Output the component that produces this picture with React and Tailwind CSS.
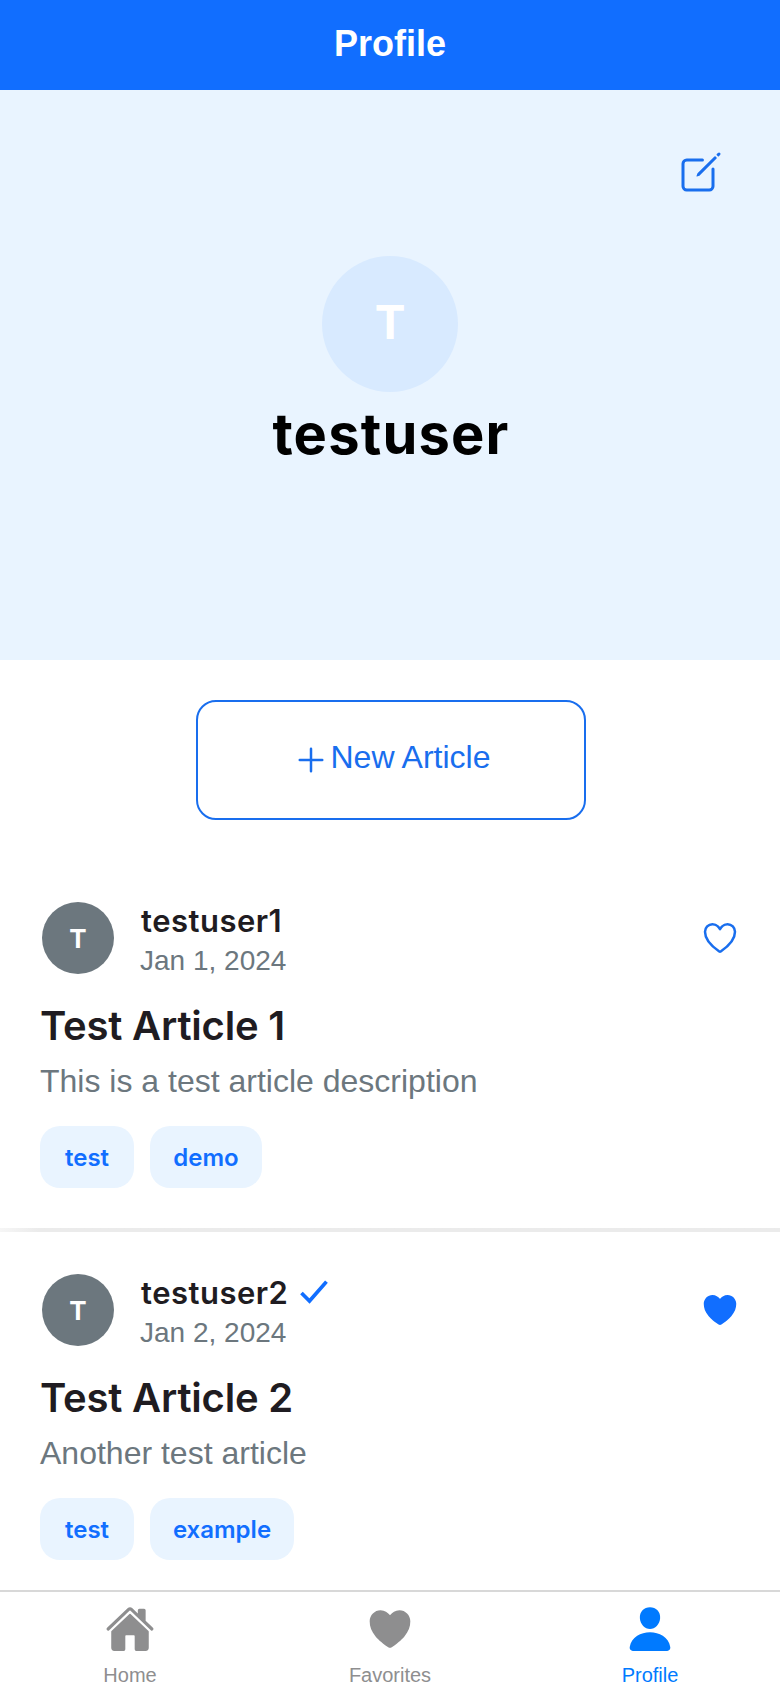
import {
  IoAddOutline,
  IoCheckmarkSharp,
  IoCreateOutline,
  IoHeart,
  IoHeartOutline,
  IoHome,
  IoPerson,
} from "react-icons/io5";

const articles = [
  {
    author: "testuser1",
    date: "Jan 1, 2024",
    title: "Test Article 1",
    description: "This is a test article description",
    tags: [
      { name: "test", width: "w-[94px]" },
      { name: "demo", width: "w-[112px]" },
    ],
  },
  {
    author: "testuser2",
    verified: true,
    favorited: true,
    date: "Jan 2, 2024",
    title: "Test Article 2",
    description: "Another test article",
    tags: [
      { name: "test", width: "w-[94px]" },
      { name: "example", width: "w-[144px]" },
    ],
  },
];

const tabs = [
  { label: "Home", Icon: IoHome },
  { label: "Favorites", Icon: IoHeart },
  { label: "Profile", Icon: IoPerson, active: true },
];

function Article({ author, verified, favorited, date, title, description, tags }) {
  return (
    <article className="flex h-[372px] shrink-0 flex-col bg-white">
      <div className="flex-1 px-10 pt-10">
        <div className="flex h-[76px] items-center">
          <div className="ml-0.5 flex size-[72px] items-center justify-center rounded-full bg-[#6c777e] font-['Inter',sans-serif] text-[26px] font-bold text-white">
            T
          </div>
          <div className="ml-[27px] flex-1">
            <div className="flex h-10 items-center pt-0.5">
              <span className="font-['Inter',sans-serif] text-[31px] font-semibold tracking-[0.5px] text-[#1f1c21]">
                {author}
              </span>
              {verified && (
                <IoCheckmarkSharp className="mb-0.5 ml-2 size-9 text-[#116eff] [&_path]:[stroke-width:52px]" />
              )}
            </div>
            <div className="-ml-px h-9 pt-[3px] text-[28px] leading-9 text-[#6c777e]">{date}</div>
          </div>
          {favorited ? (
            <IoHeart className="size-10 text-[#116eff]" />
          ) : (
            <IoHeartOutline className="size-10 text-[#196eee]" />
          )}
        </div>
        <h2 className="mt-[26px] h-12 font-['Inter',sans-serif] text-[40px] leading-[48px] font-semibold tracking-[-0.2px] whitespace-nowrap text-[#1f1c21]">
          {title}
        </h2>
        <p className="mt-[11px] h-10 text-[32px] leading-10 text-[#6c777e]">{description}</p>
        <div className="mt-[25px] flex gap-4">
          {tags.map(({ name, width }) => (
            <span
              key={name}
              className={`flex h-[62px] items-center justify-center rounded-[20px] bg-[#e9f4ff] pt-0.5 font-['Inter',sans-serif] text-2xl font-semibold text-[#116eff] ${width}`}
            >
              {name}
            </span>
          ))}
        </div>
      </div>
      <div className="h-1 bg-linear-to-r from-[#f6f6f6] via-[#ebebeb] via-5% to-[#ebebeb]" />
    </article>
  );
}

export default function App() {
  return (
    <div className="flex h-[1688px] w-[780px] flex-col overflow-hidden bg-white font-['Liberation_Sans',Arial,sans-serif]">
      <header className="flex h-20 shrink-0 items-center justify-center bg-[#116eff] pt-2 text-[36px] font-bold text-white min-h-[90px] pb-2.5">
        Profile
      </header>
      <section className="flex h-[570px] shrink-0 flex-col items-center bg-[#e9f4ff] pt-[58px]">
        <IoCreateOutline className="mr-[55px] size-12 self-end text-[#196eee]" />
        <div className="mt-[60px] flex size-[136px] items-center justify-center rounded-full bg-[#d8eaff] pb-1 font-['Inter',sans-serif] text-[46px] font-bold text-white">
          T
        </div>
        <h1 className="mt-1.5 ml-0.5 h-[72px] font-['Inter',sans-serif] text-[56px] leading-[72px] font-bold tracking-[1.2px] text-black">
          testuser
        </h1>
      </section>
      <div className="flex h-[200px] shrink-0 justify-center pt-10">
        <button className="ml-0.5 flex h-[120px] w-[390px] items-center justify-center rounded-[20px] border-2 border-[#196eee] text-[32px] text-[#196eee]">
          <IoAddOutline className="size-10" />
          <span className="-ml-px pb-1.5">New Article</span>
        </button>
      </div>
      <main className="flex min-h-0 flex-1 flex-col overflow-hidden">
        {articles.map((article) => (
          <Article key={article.author} {...article} />
        ))}
      </main>
      <nav className="flex h-[98px] shrink-0 border-t-2 border-[#d8d8d8] bg-white pt-3">
        {tabs.map(({ label, Icon, active }) => (
          <div
            key={label}
            className={`flex flex-1 flex-col items-center text-xl leading-6 ${active ? "text-[#007aff]" : "text-[#8e8e8f]"}`}
          >
            <Icon className="size-[50px]" />
            <span className="mt-[9px]">{label}</span>
          </div>
        ))}
      </nav>
    </div>
  );
}
